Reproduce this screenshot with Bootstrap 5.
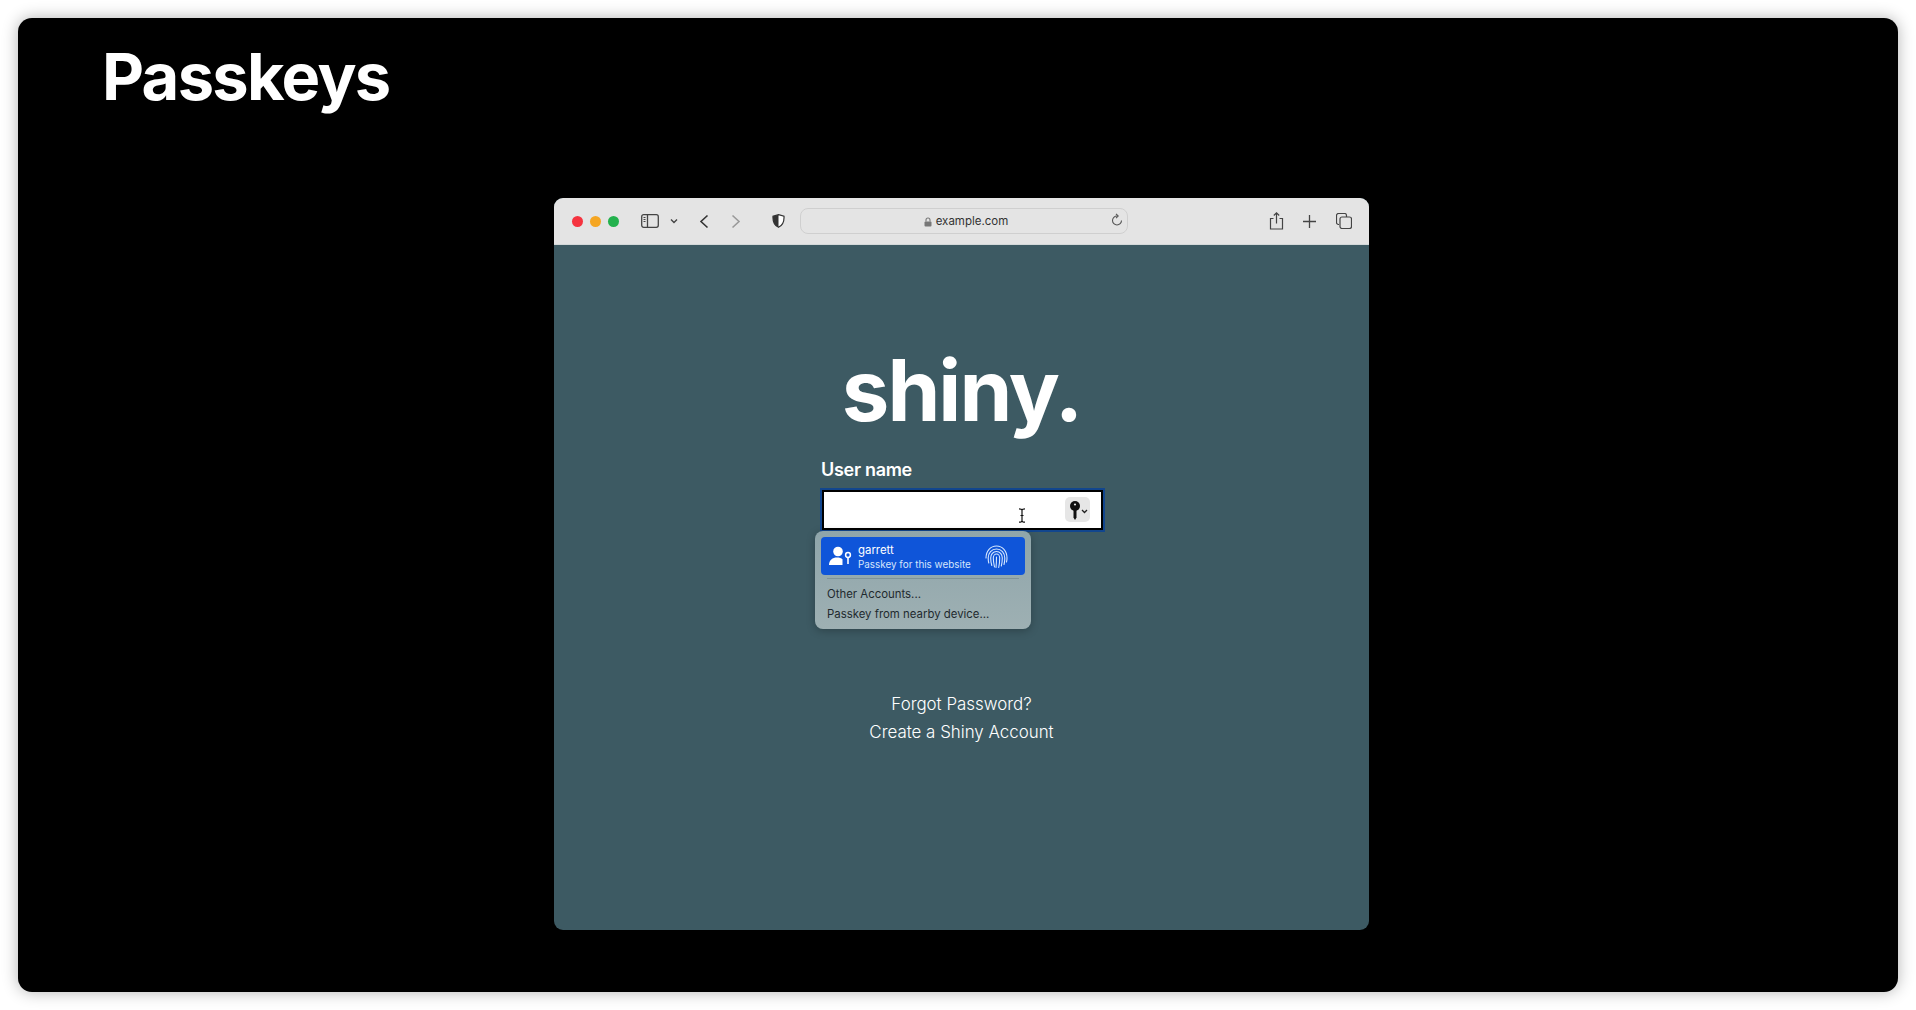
<!DOCTYPE html>
<html lang="en"><head><meta charset="utf-8"><title>Passkeys</title>
<link href="https://cdn.jsdelivr.net/npm/bootstrap@5.3.0/dist/css/bootstrap.min.css" rel="stylesheet">
<style>
html,body{height:100%;background:#fff;overflow:hidden}
body{font-family:Inter,"Liberation Sans",sans-serif;padding:18px}
.slide{height:974px;background:#000;border-radius:14px;box-shadow:0 0 16px rgba(0,0,0,.3);color:#fff;padding-left:84px;padding-top:24px}
.slide-title{font-size:65px;font-weight:700;line-height:70px;letter-spacing:-1.7px;margin:0}
.browser{width:815px;height:732px;margin-top:86px;margin-left:452px;border-radius:9px;overflow:hidden;background:#3d5a63;position:relative}
.chrome{height:47px;background:#e4e4e4;padding:0 17px 0 18px;color:#3a3a3a;border-bottom:1px solid #d3d8d9}
.dot{width:11px;height:11px;border-radius:50%}
.urlbar{width:328px;height:26px;border:1.5px solid #cfcfcf;border-radius:8px;font-size:11.5px;color:#333;position:relative;margin-left:15px;padding:2px 0 0 4px}
.reload{position:absolute;right:4px;top:4px}
.page-body{padding-top:99px}
.brand{font-size:85px;font-weight:700;line-height:94px;letter-spacing:-2px}
.signin{width:280px;margin:20px auto 0 268px;position:relative}
.field-label{font-size:18px;font-weight:600;line-height:24px;letter-spacing:-.3px;margin:0 0 8px -1px;display:block}
.field{height:40px;width:281px;background:#fff;border:2px solid #000;outline:2px solid #12468e}
.key-btn{width:25px;height:25px;background:#e6e6e6;border-radius:5px;position:absolute;left:243px;top:39px}
.ibeam{position:absolute;left:196px;top:50px}
.autofill{position:absolute;left:-7px;top:73px;width:216px;height:98px;background:linear-gradient(#8fa5aa,#9eb0b3);border-radius:8px;padding:6px 6px 0;box-shadow:0 2px 8px rgba(0,0,0,.25);color:#1f2a2e;font-size:11.4px;line-height:20px}
.cred{height:38px;background:#0f55d9;border-radius:4px;color:#fff;position:relative;line-height:14px;padding:6px 0 0 37px}
.cred div+div{font-size:9.9px;color:#d5e5fb}
.cred svg{position:absolute}
.sep{border-top:1px solid #7f9399;margin:3px 6px 5px}
.opt{padding-left:6px}
.links{font-size:16.9px;font-weight:300;line-height:28px;margin-top:160px;text-align:center}
.links a{color:#fff;text-decoration:none;display:block}
.tl-lights{gap:7px}
</style></head>
<body>
<div class="slide">
 <h1 class="slide-title">Passkeys</h1>
 <div class="browser">
  <div class="chrome d-flex align-items-center">
   <div class="d-flex tl-lights"><span class="dot" style="background:#f5333f"></span><span class="dot" style="background:#f5a623"></span><span class="dot" style="background:#23b14d"></span></div>
   <svg width="18" height="14" viewBox="0 0 18 14" style="margin-left:22px" fill="none" stroke="#444" stroke-width="1.3"><rect x=".7" y=".7" width="16.6" height="12.6" rx="2"/><path d="M6.5 1v12"/><path d="M2.5 3.5h2M2.5 5.5h2M2.5 7.5h2" stroke-width="1"/></svg>
   <svg width="8" height="6" viewBox="0 0 8 6" style="margin-left:11px" fill="none" stroke="#444" stroke-width="1.4"><path d="M1 1.5l3 3 3-3"/></svg>
   <svg width="10" height="15" viewBox="0 0 10 15" style="margin-left:21px" fill="none" stroke="#333" stroke-width="1.6"><path d="M8.5 1.5L2 7.5l6.5 6"/></svg>
   <svg width="10" height="15" viewBox="0 0 10 15" style="margin-left:22px" fill="none" stroke="#999" stroke-width="1.6"><path d="M1.5 1.5L8 7.5l-6.5 6"/></svg>
   <svg width="13" height="14" viewBox="0 0 13 14" style="margin-left:31px"><path d="M6.5.7L12 2.2c.3 5-1.3 9-5.5 11.1C2.3 11.2.7 7.2 1 2.2z" fill="#fff" stroke="#333" stroke-width="1.2"/><path d="M6.5.7v12.6C2.3 11.200.7 7.200 1 2.200z" fill="#333"/></svg>
   <div class="urlbar d-flex align-items-center justify-content-center">
    <svg width="8" height="10" viewBox="0 0 8 10" class="me-1"><path d="M2 4.5V3a2 2 0 0 1 4 0v1.5" fill="none" stroke="#777" stroke-width="1.1"/><rect x=".5" y="4.5" width="7" height="5" rx="1" fill="#777"/></svg>
    <span>example.com</span>
    <svg class="reload" width="12" height="14" viewBox="0 0 12 14" fill="none" stroke="#555" stroke-width="1.1"><path d="M6 3a4.5 4.5 0 1 0 4.5 4.5"/><path d="M5 .8L7.2 3 5 5.2"/></svg>
   </div>
   <div class="ms-auto d-flex align-items-center">
    <svg width="15" height="18" viewBox="0 0 15 18" fill="none" stroke="#444" stroke-width="1.2"><path d="M4.5 6.5H1.500v10.500h12V6.500h-3"/><path d="M7.500 11.500V1M4.800 3.500L7.500 .9l2.700 2.600"/></svg>
    <svg width="13" height="13" viewBox="0 0 13 13" style="margin-left:19px" fill="none" stroke="#444" stroke-width="1.3"><path d="M6.500 0v13M0 6.500h13"/></svg>
    <svg width="16" height="16" viewBox="0 0 16 16" style="margin-left:20px" fill="none" stroke="#444" stroke-width="1.2"><path d="M3 11.500H2.500a2 2 0 0 1-2-2v-7a2 2 0 0 1 2-2h6a2 2 0 0 1 2 2V4"/><rect x="4" y="4" width="11.500" height="11.500" rx="2"/></svg>
   </div>
  </div>
  <div class="page-body">
   <div class="brand text-center">shiny.</div>
   <div class="signin">
    <label class="field-label">User name</label>
    <div class="field"></div>
    <div class="key-btn d-flex align-items-center justify-content-center">
     <svg width="22" height="22" viewBox="0 0 22 22"><circle cx="8" cy="7" r="5" fill="#111"/><circle cx="8" cy="5.500" r="1.100" fill="#e6e6e6"/><path d="M6.500 10h3v8.500L8 21l-1.500-2.500z" fill="#111"/><path d="M15 11l2.500 2.500L20 11" fill="none" stroke="#222" stroke-width="1.300"/></svg>
    </div>
    <svg class="ibeam" width="8" height="15" viewBox="0 0 8 15" fill="none" stroke="#111" stroke-width="1.200"><path d="M1 .8c2 0 3 .5 3 1.500v10.400c0 1-1 1.500-3 1.500M7 .8c-2 0-3 .5-3 1.500v10.400c0 1 1 1.500 3 1.500M2.500 7.500h3"/></svg>
    <div class="autofill">
     <div class="cred">
      <svg style="left:8px;top:9px" width="24" height="20" viewBox="0 0 24 20"><circle cx="9" cy="5.500" r="4.800" fill="#fff"/><path d="M0 19c0-5 3.500-7.500 8-7.500 2.500 0 4.300.6 5.500 1.700V19z" fill="#fff"/><circle cx="19" cy="9" r="2.400" fill="none" stroke="#fff" stroke-width="1.500"/><path d="M18.200 11h1.600v7h-1.600z" fill="#fff"/></svg>
      <div>garrett</div><div>Passkey for this website</div>
      <svg style="left:164px;top:8px" width="23" height="23" viewBox="0 0 23 23" fill="none" stroke="#d6e8ff" stroke-width="1.100" stroke-linecap="round"><path d="M1 13C1 6 5.500 1 11.500 1S22 6 22 13c0 1.500-.2 3-.5 4"/><path d="M3.800 18c-.4-1.500-.6-3.200-.6-5 0-5 3.400-9 8.300-9s8.300 4 8.300 9c0 2.500-.2 4.500-.8 6.500"/><path d="M6.800 20.500C6 18 5.700 15.500 5.700 13c0-3.500 2.400-6.500 5.800-6.500s5.800 3 5.800 6.500c0 3-.3 5.500-1 8"/><path d="M9.500 22c-.7-3-1.200-6-1.200-9 0-2 1.300-4 3.200-4s3.200 2 3.200 4c0 3.500-.3 6.500-1 9.500"/><path d="M11.500 12c0 3.500-.1 7-.5 10.500"/></svg>
     </div>
     <div class="sep"></div>
     <div class="opt">Other Accounts...</div>
     <div class="opt">Passkey from nearby device...</div>
    </div>
   </div>
   <div class="links"><a href="#">Forgot Password?</a><a href="#">Create a Shiny Account</a></div>
  </div>
 </div>
</div>
<script src="https://cdn.jsdelivr.net/npm/bootstrap@5.3.0/dist/js/bootstrap.bundle.min.js"></script>
</body></html>
